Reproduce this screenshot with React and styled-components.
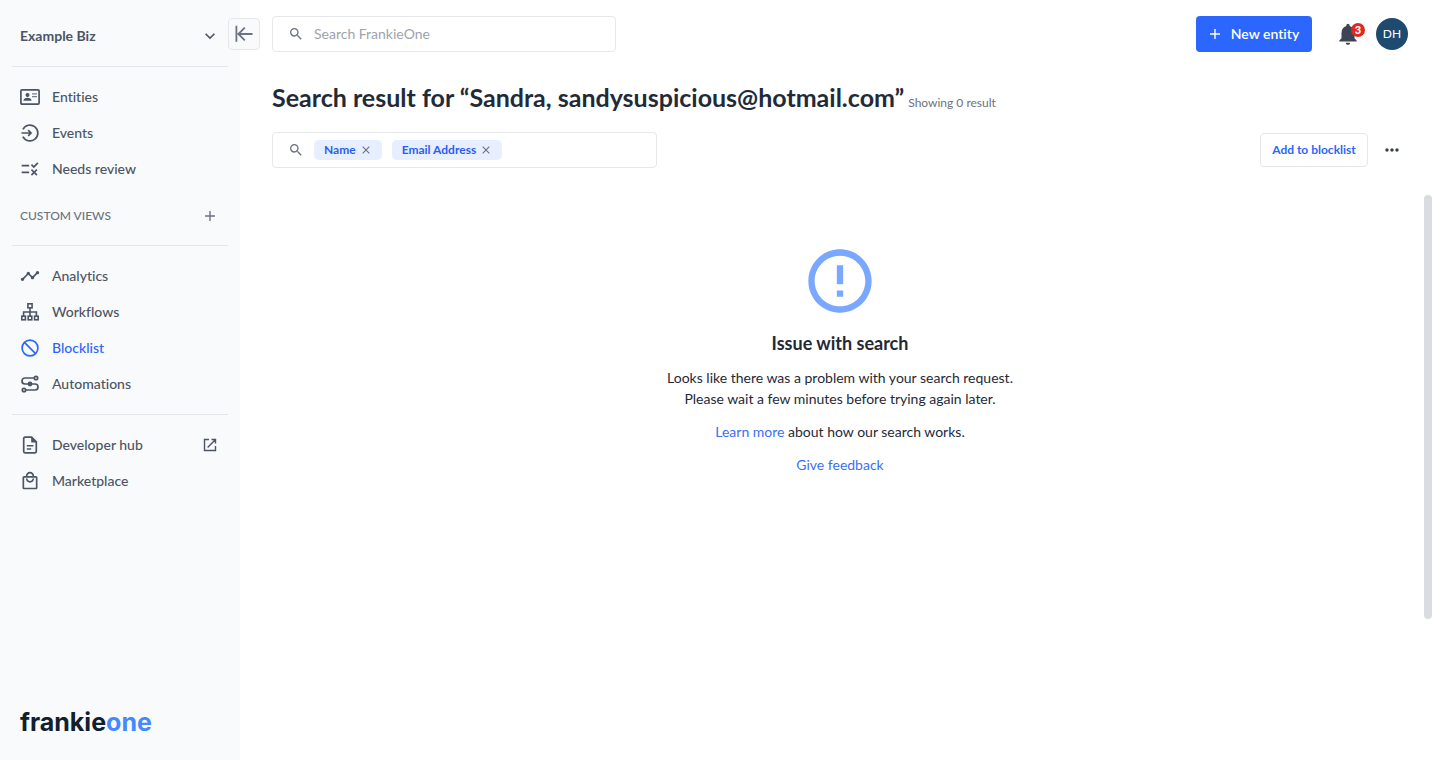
import React from "react";
import styled, { createGlobalStyle } from "styled-components";
import {
  MdSearch,
  MdErrorOutline,
  MdExpandMore,
  MdRule,
  MdTimeline,
  MdOutlineLocalMall,
  MdMoreHoriz,
  MdNotifications,
} from "react-icons/md";

const GlobalStyle = createGlobalStyle`
  * { box-sizing: border-box; }
  body {
    margin: 0;
    background: #ffffff;
    color: #1f2937;
    font-family: Lato, "Liberation Sans", sans-serif;
    font-size: 14px;
    font-variant-ligatures: none;
  }
  button, input { font: inherit; color: inherit; }
  button { border: 0; padding: 0; background: none; cursor: pointer; }
  a { text-decoration: none; }
  svg { display: block; flex: none; }
`;

const Shell = styled.div`
  display: flex;
  min-height: 100vh;
`;

/* ---------- Sidebar ---------- */

const Sidebar = styled.aside`
  position: relative;
  flex: none;
  display: flex;
  flex-direction: column;
  width: 240px;
  padding: 18px 12px 22px;
  background: #f9fafc;
  color: #4b5563;
`;

const OrgButton = styled.button`
  display: flex;
  align-items: center;
  justify-content: space-between;
  height: 36px;
  padding: 0 8px;
  font-weight: 700;
  line-height: 20px;
`;

const CollapseButton = styled.button`
  position: absolute;
  top: 18px;
  right: -20px;
  display: grid;
  place-items: center;
  width: 32px;
  height: 32px;
  border: 1px solid #e5e7eb;
  border-radius: 4px;
  background: #f9fafc;
  color: #6b7280;
`;

const Divider = styled.hr`
  width: 100%;
  height: 1px;
  margin: 12px 0;
  border: 0;
  background: #e3e6ea;
`;

const NavList = styled.nav`
  display: flex;
  flex-direction: column;
`;

const NavLink = styled.a`
  display: flex;
  align-items: center;
  gap: 12px;
  height: 36px;
  padding: 0 8px;
  font-weight: 500;
  line-height: 20px;
  color: ${(p) => (p.$active ? "#2b66ff" : "#4b5563")};
`;

const NavLabel = styled.span`
  flex: 1;
`;

const SectionHead = styled.div`
  display: flex;
  align-items: center;
  justify-content: space-between;
  height: 34px;
  margin-top: 12px;
  padding: 0 8px;
`;

const SectionTitle = styled.h2`
  margin: 0;
  font-size: 12px;
  font-weight: 500;
  line-height: 16px;
  color: #6b7280;
`;

const IconButton = styled.button`
  display: grid;
  place-items: center;
  width: ${(p) => p.$size}px;
  height: ${(p) => p.$size}px;
  color: ${(p) => p.$color};
`;

const Logo = styled.div`
  margin-top: auto;
  padding: 0 8px;
  font-family: Inter, "Liberation Sans", sans-serif;
  font-size: 25px;
  font-weight: 700;
  line-height: 32px;
  color: #10202e;
`;

const LogoAccent = styled.span`
  color: #4489ff;
`;

/* ---------- Main ---------- */

const Main = styled.main`
  flex: 1;
  min-width: 0;
  display: flex;
  flex-direction: column;
  padding-top: 16px;
`;

const TopBar = styled.header`
  display: flex;
  align-items: center;
  justify-content: space-between;
  height: 36px;
  padding: 0 32px;
`;

const SearchBox = styled.label`
  display: flex;
  align-items: center;
  gap: 10px;
  width: ${(p) => p.$width}px;
  height: 36px;
  padding: 0 16px 0 15px;
  border: 1px solid #e5e7eb;
  border-radius: 4px;
  background: #ffffff;
  color: #6b7280;
`;

const TextInput = styled.input`
  flex: 1;
  min-width: 0;
  padding: 0;
  border: 0;
  outline: 0;
  background: none;
  line-height: 20px;
  &::placeholder {
    color: #9ca3af;
    opacity: 1;
  }
`;

const TopActions = styled.div`
  display: flex;
  align-items: center;
`;

const PrimaryButton = styled.button`
  display: flex;
  align-items: center;
  justify-content: center;
  gap: 10px;
  width: 116px;
  height: 36px;
  border-radius: 4px;
  background: #2b66ff;
  color: #ffffff;
  font-weight: 600;
  line-height: 20px;
`;

const BellButton = styled.button`
  position: relative;
  display: grid;
  place-items: center;
  width: 26px;
  height: 26px;
  margin: 0 15px 0 23px;
  color: #3d4555;
`;

const Badge = styled.span`
  position: absolute;
  top: 2px;
  right: -4px;
  width: 14px;
  height: 14px;
  border-radius: 50%;
  background: #e02626;
  color: #ffffff;
  font-size: 11px;
  font-weight: 900;
  line-height: 14px;
  text-align: center;
`;

const Avatar = styled.button`
  width: 32px;
  height: 32px;
  border-radius: 50%;
  background: #1f4a70;
  color: #ffffff;
  font-size: 12px;
  line-height: 32px;
  text-align: center;
`;

const TitleRow = styled.div`
  display: flex;
  align-items: baseline;
  gap: 4px;
  margin-top: 28px;
  padding: 0 32px;
`;

const Title = styled.h1`
  margin: 0;
  font-size: 25px;
  font-weight: 700;
  line-height: 34px;
  color: #1f2b38;
`;

const ResultCount = styled.span`
  font-size: 12px;
  line-height: 16px;
  color: #6b7280;
`;

const FilterBar = styled.div`
  display: flex;
  align-items: center;
  justify-content: space-between;
  margin-top: 18px;
  padding: 0 32px;
`;

const ChipList = styled.span`
  display: flex;
  gap: 10px;
`;

const Chip = styled.span`
  display: flex;
  align-items: center;
  gap: 6px;
  height: 20px;
  padding: 0 12px 0 10px;
  border-radius: 5px;
  background: #e7eeff;
  color: #2b5ff0;
  font-size: 12px;
  font-weight: 700;
  line-height: 20px;
`;

const FilterActions = styled.div`
  display: flex;
  align-items: center;
  gap: 8px;
`;

const OutlineButton = styled.button`
  width: 108px;
  height: 34px;
  border: 1px solid #e5e7eb;
  border-radius: 4px;
  color: #2b66ff;
  font-size: 12px;
  font-weight: 700;
  line-height: 20px;
`;

const Results = styled.section`
  flex: 1;
  display: grid;
  grid-template-columns: 8px 1fr 8px;
  margin-top: 27px;
  padding: 0 8px;
`;

const EmptyState = styled.div`
  grid-column: 2;
  display: flex;
  flex-direction: column;
  align-items: center;
  padding-top: 48px;
  text-align: center;
  line-height: 21px;
  color: #1f2937;
`;

const EmptyIcon = styled(MdErrorOutline)`
  width: 76px;
  height: 76px;
  color: #7aa7ff;
`;

const EmptyTitle = styled.h2`
  margin: 12px 0;
  font-size: 18px;
  font-weight: 700;
  line-height: 24px;
`;

const EmptyText = styled.p`
  margin: 0 0 12px;
`;

const TextLink = styled.a`
  color: #3b6ff5;
`;

const ScrollThumb = styled.div`
  grid-column: 3;
  height: 75%;
  border-radius: 4px;
  background: #d9dde2;
`;

/* ---------- Icons ---------- */

const Stroke = ({ size = 20, width = 2, children }) => (
  <svg
    width={size}
    height={size}
    viewBox={`0 0 ${size} ${size}`}
    fill="none"
    stroke="currentColor"
    strokeWidth={width}
    aria-hidden="true"
  >
    {children}
  </svg>
);

const PlusIcon = () => (
  <Stroke size={12} width={1.4}>
    <path d="M6 1v10M1 6h10" />
  </Stroke>
);

const CloseIcon = () => (
  <Stroke size={8} width={1.1}>
    <path d="M.7.7l6.6 6.6M7.3.7L.7 7.3" />
  </Stroke>
);

const CollapseIcon = () => (
  <Stroke size={20} width={1.8}>
    <path d="M2.4 1.8v16M18.5 10H4.4M10.8 3.7L4.4 10l6.4 6.3" />
  </Stroke>
);

const EntitiesIcon = () => (
  <Stroke width={1.7}>
    <rect x=".9" y="2.9" width="18.2" height="14.2" rx="1" />
    <circle cx="7.5" cy="7.9" r="2" fill="currentColor" stroke="none" />
    <path d="M3.4 13.8c0-2 2-3 4.1-3s4.1 1 4.1 3z" fill="currentColor" stroke="none" />
    <path d="M12 6.8h5M12 9.6h5" strokeWidth="1.3" opacity=".75" />
  </Stroke>
);

const EventsIcon = () => (
  <Stroke width={1.7}>
    <path d="M2.9 6.4a7.9 7.9 0 1 1 0 7.2" />
    <path d="M1.5 10h9M8.2 7.2L11 10l-2.8 2.8" />
  </Stroke>
);

const WorkflowsIcon = () => (
  <Stroke width={1.6}>
    <rect x="7.9" y="1.8" width="4.2" height="4" />
    <rect x="1.8" y="14.2" width="3.6" height="3.6" />
    <rect x="8.2" y="14.2" width="3.6" height="3.6" />
    <rect x="14.6" y="14.2" width="3.6" height="3.6" />
    <path d="M10 6v8M3.6 14v-4h12.8v4" />
  </Stroke>
);

const BlockIcon = () => (
  <Stroke width={1.7}>
    <circle cx="10" cy="10" r="7.9" />
    <path d="M4.4 4.4l11.2 11.2" />
  </Stroke>
);

const AutomationsIcon = () => (
  <Stroke width={1.7}>
    <circle cx="16" cy="4" r="1.7" />
    <circle cx="4" cy="16" r="1.7" />
    <path d="M14.2 4H5a3 3 0 0 0 0 6h10a3 3 0 0 1 0 6H5.8" />
    <circle cx="10" cy="10" r="2.4" fill="currentColor" stroke="none" />
  </Stroke>
);

const DocumentIcon = () => (
  <Stroke width={1.7}>
    <path d="M11.6 2.2H5a1.3 1.3 0 0 0-1.3 1.3v13A1.3 1.3 0 0 0 5 17.8h10a1.3 1.3 0 0 0 1.3-1.3V6.9z" />
    <path d="M11.2 1.8v5.6h5.6z" fill="currentColor" stroke="none" />
    <path d="M6.8 10.8h6.6M6.8 13.9h4.4" strokeWidth="1.5" />
  </Stroke>
);

const ExternalIcon = () => (
  <Stroke width={1.4}>
    <path d="M9 4.5H4.5v11h11V11M11.5 4.5h4v4M15.3 4.7L7.6 12.4" />
  </Stroke>
);

const PRIMARY_NAV = [
  { label: "Entities", icon: <EntitiesIcon /> },
  { label: "Events", icon: <EventsIcon /> },
  { label: "Needs review", icon: <MdRule size={20} /> },
];

const TOOLS_NAV = [
  { label: "Analytics", icon: <MdTimeline size={20} /> },
  { label: "Workflows", icon: <WorkflowsIcon /> },
  { label: "Blocklist", icon: <BlockIcon />, active: true },
  { label: "Automations", icon: <AutomationsIcon /> },
];

const RESOURCE_NAV = [
  { label: "Developer hub", icon: <DocumentIcon />, external: true },
  { label: "Marketplace", icon: <MdOutlineLocalMall size={20} /> },
];

const Nav = ({ label, items }) => (
  <NavList aria-label={label}>
    {items.map((item) => (
      <NavLink
        key={item.label}
        href="#"
        $active={item.active}
        aria-current={item.active ? "page" : undefined}
      >
        {item.icon}
        <NavLabel>{item.label}</NavLabel>
        {item.external && <ExternalIcon />}
      </NavLink>
    ))}
  </NavList>
);

const FILTERS = ["Name", "Email Address"];

export default function App() {
  return (
    <>
      <GlobalStyle />
      <Shell>
        <Sidebar>
          <OrgButton>
            Example Biz
            <MdExpandMore size={20} />
          </OrgButton>
          <CollapseButton aria-label="Collapse sidebar">
            <CollapseIcon />
          </CollapseButton>
          <Divider />
          <Nav label="Primary" items={PRIMARY_NAV} />
          <SectionHead>
            <SectionTitle>CUSTOM VIEWS</SectionTitle>
            <IconButton $size={20} $color="#6b7280" aria-label="Add custom view">
              <PlusIcon />
            </IconButton>
          </SectionHead>
          <Divider />
          <Nav label="Tools" items={TOOLS_NAV} />
          <Divider />
          <Nav label="Resources" items={RESOURCE_NAV} />
          <Logo>
            frankie<LogoAccent>one</LogoAccent>
          </Logo>
        </Sidebar>

        <Main>
          <TopBar>
            <SearchBox $width={344}>
              <MdSearch size={16} />
              <TextInput placeholder="Search FrankieOne" aria-label="Search FrankieOne" />
            </SearchBox>
            <TopActions>
              <PrimaryButton>
                <PlusIcon />
                New entity
              </PrimaryButton>
              <BellButton aria-label="Notifications">
                <MdNotifications size={26} />
                <Badge>3</Badge>
              </BellButton>
              <Avatar>DH</Avatar>
            </TopActions>
          </TopBar>

          <TitleRow>
            <Title>Search result for “Sandra, sandysuspicious@hotmail.com”</Title>
            <ResultCount>Showing 0 result</ResultCount>
          </TitleRow>

          <FilterBar>
            <SearchBox $width={385}>
              <MdSearch size={16} />
              <ChipList>
                {FILTERS.map((name) => (
                  <Chip key={name}>
                    {name}
                    <IconButton $size={8} $color="#6b7280" aria-label={`Remove ${name}`}>
                      <CloseIcon />
                    </IconButton>
                  </Chip>
                ))}
              </ChipList>
              <TextInput aria-label="Filter results" />
            </SearchBox>
            <FilterActions>
              <OutlineButton>Add to blocklist</OutlineButton>
              <IconButton $size={32} $color="#374151" aria-label="More actions">
                <MdMoreHoriz size={20} />
              </IconButton>
            </FilterActions>
          </FilterBar>

          <Results>
            <EmptyState>
              <EmptyIcon />
              <EmptyTitle>Issue with search</EmptyTitle>
              <EmptyText>
                Looks like there was a problem with your search request.
                <br />
                Please wait a few minutes before trying again later.
              </EmptyText>
              <EmptyText>
                <TextLink href="#">Learn more</TextLink> about how our search works.
              </EmptyText>
              <TextLink href="#">Give feedback</TextLink>
            </EmptyState>
            <ScrollThumb />
          </Results>
        </Main>
      </Shell>
    </>
  );
}
